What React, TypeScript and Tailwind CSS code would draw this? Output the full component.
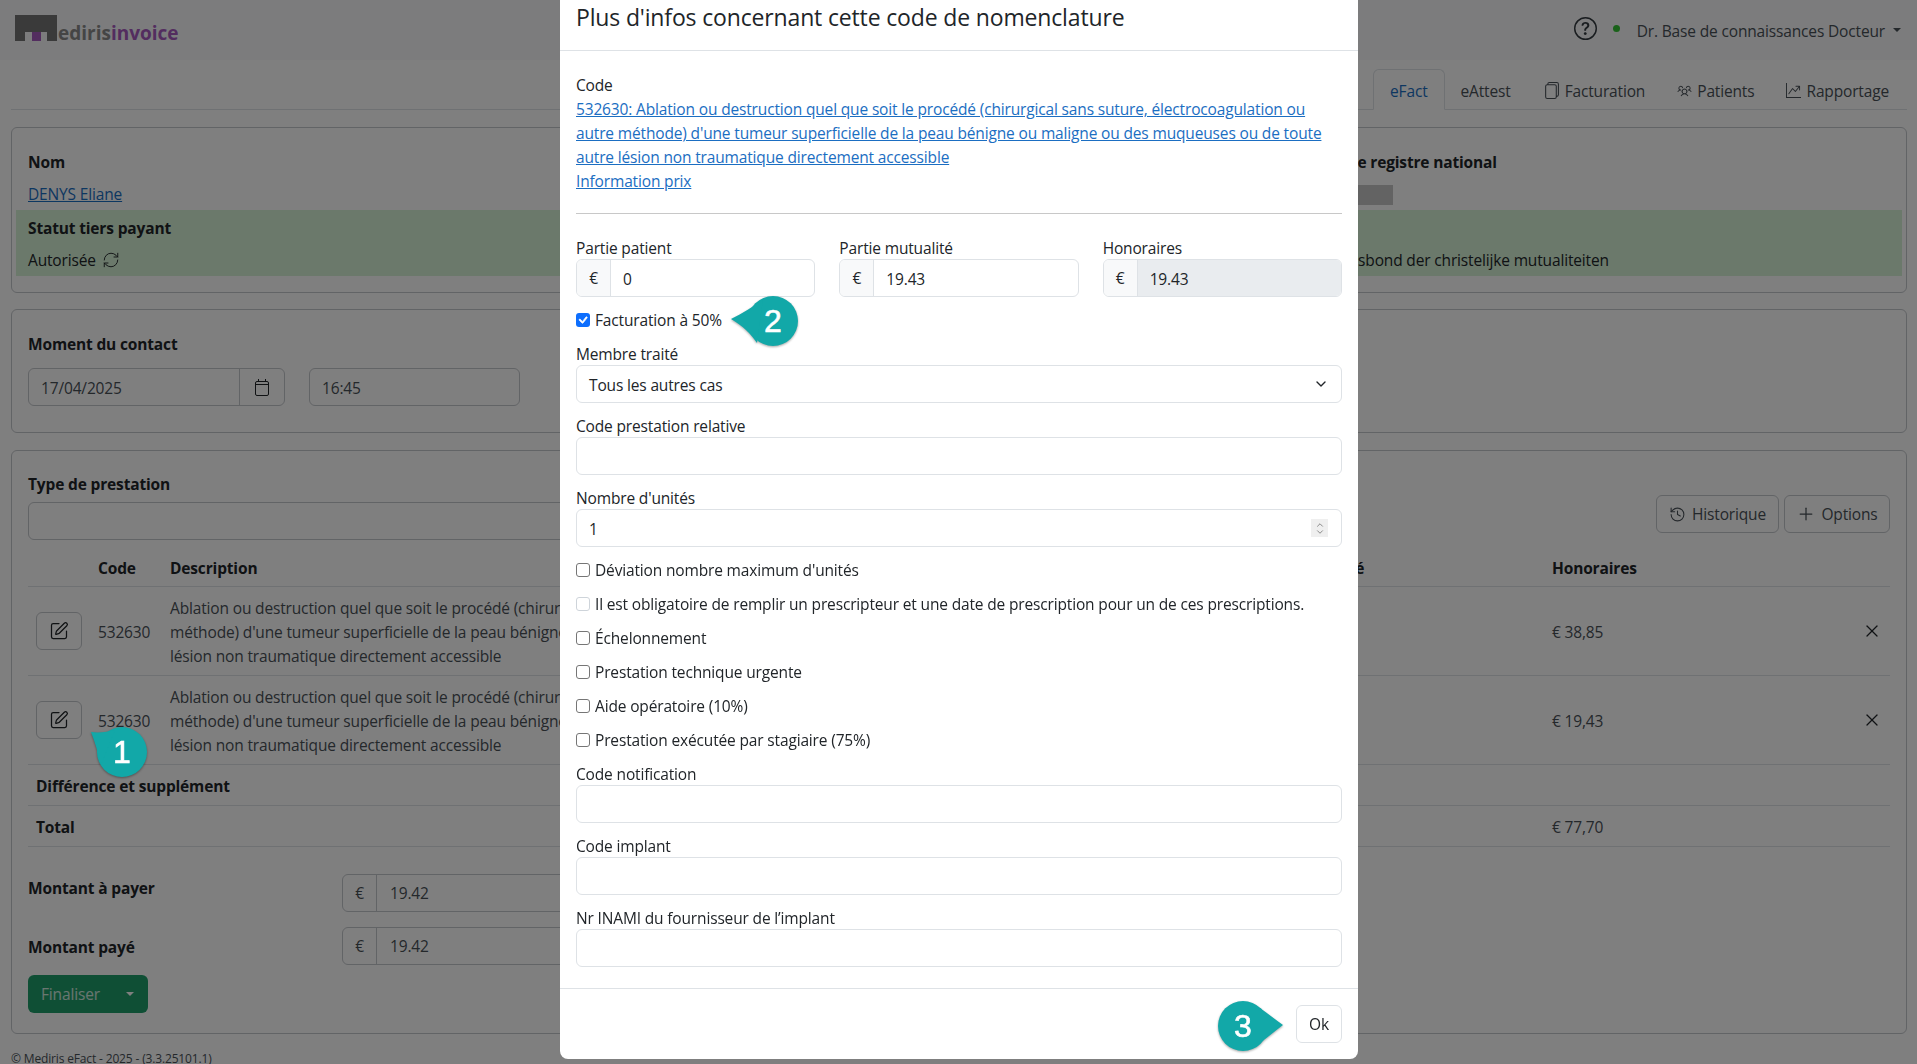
import { ReactNode } from "react";
import { ChevronDown, ChevronUp, History, Plus, RefreshCw, SquarePen, X } from "lucide-react";
import { BsCheck, BsFiles, BsGraphUpArrow, BsQuestionCircle } from "react-icons/bs";
import { PiUsersThree } from "react-icons/pi";

const DESCRIPTION = (
  <>
    Ablation ou destruction quel que soit le procédé (chirurgical sans suture, électrocoagulation ou autre
    <br />
    méthode) d'une tumeur superficielle de la peau bénigne ou maligne ou des muqueuses ou de toute autre
    <br />
    lésion non traumatique directement accessible
  </>
);

const ROW_GRID = "grid grid-cols-[62px_72px_1069px_313px_1fr] items-center border-b border-[#dee2e6]";

function Logo() {
  return (
    <div className="-mt-[4px] flex items-end pl-[15px]">
      <svg width="42" height="26" viewBox="0 0 42 26" className="shrink-0">
        <path d="M0 0H42V26H32V17H10V26H0Z" fill="#747474" />
        <rect x="17" y="17" width="9" height="9" fill="#a65abf" />
      </svg>
      <span className="-mb-[5px] ml-px text-[19px] leading-[26px] font-bold tracking-normal text-[#8a8a8a]">
        ediris<span className="text-[#a65abf]">invoice</span>
      </span>
    </div>
  );
}

function Navbar() {
  return (
    <header className="flex h-[60px] items-center justify-between bg-[#f8f9fa] pr-[16px]">
      <Logo />
      <div className="flex items-center">
        <BsQuestionCircle className="mr-[16px] -mt-1 size-[23px] text-[#343a40]" />
        <span className="mr-[17px] -mt-1 size-[7px] rounded-full bg-[#34c434]" />
        <span className="mt-[2px] text-[#495057]">Dr. Base de connaissances Docteur</span>
        <span className="ml-[8px] h-0 w-0 border-x-[4px] border-t-[4px] border-x-transparent border-t-[#495057]" />
      </div>
    </header>
  );
}

function Tab({ children, active }: { children: ReactNode; active?: boolean }) {
  return (
    <div
      className={
        active
          ? "-mb-px flex h-[41px] items-center rounded-t-md border border-b-white border-[#dee2e6] px-[16px] pt-[2px] text-[#1b6ec2]"
          : "-mb-px flex h-[41px] items-center gap-[5px] border border-transparent px-[15px] pt-[2px] text-[#495057]"
      }
    >
      {children}
    </div>
  );
}

function Tabs() {
  return (
    <nav className="mt-[9px] flex h-[41px] justify-end border-b border-[#dee2e6] pr-[2px]">
      <Tab active>eFact</Tab>
      <Tab>eAttest</Tab>
      <Tab>
        <BsFiles className="size-[17px]" />
        Facturation
      </Tab>
      <Tab>
        <PiUsersThree className="size-[15px]" />
        Patients
      </Tab>
      <Tab>
        <BsGraphUpArrow className="size-[15px]" />
        Rapportage
      </Tab>
    </nav>
  );
}

function PatientCard() {
  return (
    <section className="mt-[17px] h-[166px] rounded-md border border-[#c4c8cc] px-[16px] pt-[22px]">
      <div className="grid grid-cols-[1253px_1fr]">
        <div className="flex flex-col gap-[8px]">
          <strong className="font-bold">Nom</strong>
          <a className="text-[#1b6ec2] underline">DENYS Eliane</a>
        </div>
        <div className="flex flex-col gap-[8px]">
          <strong className="font-bold">Numéro de registre national</strong>
          <span className="mt-[3px] h-[20px] w-[112px] bg-[#c6c6c6]" />
        </div>
      </div>
      <div className="-mx-[12px] mt-[4px] grid h-[66px] grid-cols-[1253px_1fr] bg-[#d6f2d6] px-[12px] pt-[6px]">
        <div className="flex flex-col gap-[8px]">
          <strong className="font-bold">Statut tiers payant</strong>
          <span className="flex items-center gap-[6px]">
            Autorisée <RefreshCw className="size-[18px]" strokeWidth={1.25} />
          </span>
        </div>
        <div className="flex flex-col gap-[8px]">
          <strong className="pl-[1px] font-bold">Mutualité</strong>
          <span className="pl-[42px]">Landsbond der christelijke mutualiteiten</span>
        </div>
      </div>
    </section>
  );
}

function CalendarIcon() {
  return (
    <svg width="14" height="17" viewBox="0 0 14 17" fill="none" stroke="currentColor" strokeWidth="1">
      <rect x="0.5" y="2.5" width="13" height="14" rx="1.5" />
      <path d="M0.5 5.5H13.5M3.5 0V2.5M10.5 0V2.5" />
    </svg>
  );
}

function ContactCard() {
  return (
    <section className="mt-[16px] h-[124px] rounded-md border border-[#c4c8cc] px-[16px] pt-[22px]">
      <strong className="block h-[24px] font-bold">Moment du contact</strong>
      <div className="mt-[12px] flex gap-[24px]">
        <div className="flex h-[38px] w-[257px] rounded-md border border-[#c4c8cc]">
          <span className="flex flex-1 items-center pl-[12px] pt-[2px] text-[#495057]">17/04/2025</span>
          <span className="flex w-[45px] items-center justify-center border-l border-[#c4c8cc]">
            <CalendarIcon />
          </span>
        </div>
        <div className="flex h-[38px] w-[211px] items-center rounded-md border border-[#c4c8cc] pl-[12px] pt-[2px] text-[#495057]">
          16:45
        </div>
      </div>
    </section>
  );
}

function PrestationRow({ amount }: { amount: string }) {
  return (
    <div className={`${ROW_GRID} h-[89px]`}>
      <div className="flex justify-end pr-[8px]">
        <span className="flex h-[38px] w-[46px] items-center justify-center rounded-md border border-[#c4c8cc]">
          <SquarePen className="size-[20px] text-[#212529]" strokeWidth={1.5} />
        </span>
      </div>
      <span className="pl-[8px] pt-[2px] text-[#495057]">532630</span>
      <span className="overflow-hidden whitespace-nowrap pl-[8px] pt-[2px] text-[#495057]">{DESCRIPTION}</span>
      <span />
      <div className="flex items-center justify-between pl-[8px] pr-[8px]">
        <span className="pt-[2px] text-[#495057]">{amount}</span>
        <X className="size-[20px] text-[#212529]" strokeWidth={1.5} />
      </div>
    </div>
  );
}

function AmountRow({ label, value, top, labelTop }: { label: string; value: string; top: string; labelTop: string }) {
  return (
    <div className={`flex items-start ${top}`}>
      <strong className={`w-[314px] font-bold ${labelTop}`}>{label}</strong>
      <div className="flex h-[38px] w-[300px] rounded-md border border-[#c4c8cc]">
        <span className="flex w-[34px] items-center justify-center border-r border-[#c4c8cc] text-[#495057]">€</span>
        <span className="flex items-center pl-[13px] text-[#495057]">{value}</span>
      </div>
    </div>
  );
}

function PrestationCard() {
  return (
    <section className="mt-[17px] h-[584px] rounded-md border border-[#c4c8cc] px-[16px] pt-[21px]">
      <div className="flex items-start justify-between">
        <div className="w-[1300px]">
          <strong className="block h-[24px] font-bold">Type de prestation</strong>
          <div className="mt-[6px] h-[38px] rounded-md border border-[#c4c8cc]" />
        </div>
        <div className="mt-[23px] flex gap-[5px]">
          <span className="flex h-[38px] w-[123px] items-center justify-center gap-[6px] rounded-md border border-[#c4c8cc] text-[#495057]">
            <History className="size-[17px]" strokeWidth={1.5} />
            Historique
          </span>
          <span className="flex h-[38px] w-[106px] items-center justify-center gap-[5px] rounded-md border border-[#c4c8cc] text-[#495057]">
            <Plus className="size-[20px]" strokeWidth={1.5} />
            Options
          </span>
        </div>
      </div>
      <div className="mt-[16px]">
        <div className={`${ROW_GRID} h-[31px] pb-[8px] font-bold`}>
          <span />
          <span className="pl-[8px]">Code</span>
          <span className="pl-[8px]">Description</span>
          <span className="pl-[8px]">Partie mutualité</span>
          <span className="pl-[8px]">Honoraires</span>
        </div>
        <PrestationRow amount="€ 38,85" />
        <PrestationRow amount="€ 19,43" />
        <div className="flex h-[41px] items-center border-b border-[#dee2e6] pl-[8px] pt-[2px] font-bold">
          Différence et supplément
        </div>
        <div className={`${ROW_GRID} h-[41px] pt-[2px]`}>
          <strong className="col-span-4 pl-[8px] font-bold">Total</strong>
          <span className="pl-[8px] text-[#495057]">€ 77,70</span>
        </div>
      </div>
      <AmountRow label="Montant à payer" value="19.42" top="mt-[27px]" labelTop="mt-[2px]" />
      <AmountRow label="Montant payé" value="19.42" top="mt-[15px]" labelTop="mt-[8px]" />
      <div className="mt-[10px] flex h-[38px] w-[120px] items-center justify-between rounded-md bg-[#1f9f6a] pl-[13px] pr-[14px] text-white/80">
        Finaliser
        <span className="h-0 w-0 border-x-[4px] border-t-[4px] border-x-transparent border-t-white" />
      </div>
    </section>
  );
}

function Field({ label, className, children }: { label: string; className?: string; children?: ReactNode }) {
  return (
    <div className={className}>
      <label className="block h-[24px] leading-[26px]">{label}</label>
      <div className="flex h-[38px] items-center justify-between rounded-md border border-[#dee2e6] pl-[12px] pr-[12px]">
        {children}
      </div>
    </div>
  );
}

function Money({ label, value, disabled }: { label: string; value: string; disabled?: boolean }) {
  return (
    <div className="flex-1">
      <label className="block h-[24px] leading-[26px]">{label}</label>
      <div className="flex h-[38px] overflow-hidden rounded-md border border-[#dee2e6]">
        <span className="flex w-[34px] items-center justify-center border-r border-[#dee2e6] bg-[#f8f9fa]">€</span>
        <span className={disabled ? "flex flex-1 items-center bg-[#e9ecef] pl-[12px] pt-px" : "flex flex-1 items-center pl-[12px] pt-px"}>
          {value}
        </span>
      </div>
    </div>
  );
}

function Check({ label, checked, faint }: { label: string; checked?: boolean; faint?: boolean }) {
  return (
    <div className="flex h-[24px] items-center gap-[5px]">
      <span
        className={
          checked
            ? "flex size-[14px] items-center justify-center rounded-[3px] bg-[#0d6efd] text-white"
            : faint
              ? "size-[14px] rounded-[3px] border border-[#ced4da]"
              : "size-[14px] rounded-[3px] border border-[#767676]"
        }
      >
        {checked && <BsCheck className="size-[16px] shrink-0" strokeWidth={0.6} />}
      </span>
      <span>{label}</span>
    </div>
  );
}

function Modal() {
  return (
    <div className="absolute left-[560px] top-[-18px] flex h-[1077px] w-[798px] flex-col rounded-b-lg bg-white">
      <div className="flex h-[69px] shrink-0 items-center border-b border-[#dee2e6] px-[16px] pt-[2px] text-[23px]">
        Plus d'infos concernant cette code de nomenclature
      </div>
      <div className="flex-1 px-[16px] pt-[22px]">
        <div>Code</div>
        <a className="block text-[#1b6ec2] underline">
          532630: Ablation ou destruction quel que soit le procédé (chirurgical sans suture, électrocoagulation ou
          <br />
          autre méthode) d'une tumeur superficielle de la peau bénigne ou maligne ou des muqueuses ou de toute
          <br />
          autre lésion non traumatique directement accessible
        </a>
        <a className="block text-[#1b6ec2] underline">Information prix</a>
        <hr className="mt-[20px] border-[#c8c8c8]" />
        <div className="mt-[21px] flex gap-[24px]">
          <Money label="Partie patient" value="0" />
          <Money label="Partie mutualité" value="19.43" />
          <Money label="Honoraires" value="19.43" disabled />
        </div>
        <div className="mt-[11px]">
          <Check label="Facturation à 50%" checked />
        </div>
        <Field label="Membre traité" className="mt-[9px]">
          <span className="pt-px">Tous les autres cas</span>
          <ChevronDown className="size-[16px]" />
        </Field>
        <Field label="Code prestation relative" className="mt-[10px]" />
        <Field label="Nombre d'unités" className="mt-[10px]">
          <span className="pt-px">1</span>
          <span className="mr-[1px] flex h-[18px] w-[17px] flex-col items-center justify-center bg-[#efefef] text-[#767676]">
            <ChevronUp className="-mb-[3px] size-[10px]" />
            <ChevronDown className="size-[10px]" />
          </span>
        </Field>
        <div className="mt-[11px] flex flex-col gap-[10px]">
          <Check label="Déviation nombre maximum d'unités" />
          <Check label="Il est obligatoire de remplir un prescripteur et une date de prescription pour un de ces prescriptions." faint />
          <Check label="Échelonnement" />
          <Check label="Prestation technique urgente" />
          <Check label="Aide opératoire (10%)" />
          <Check label="Prestation exécutée par stagiaire (75%)" />
        </div>
        <Field label="Code notification" className="mt-[9px]" />
        <Field label="Code implant" className="mt-[10px]" />
        <Field label="Nr INAMI du fournisseur de l’implant" className="mt-[10px]" />
      </div>
      <div className="flex h-[71px] shrink-0 items-start justify-end border-t border-[#dee2e6] px-[16px] pt-[16px]">
        <span className="flex h-[38px] w-[46px] items-center justify-center rounded-md border border-[#dee2e6]">Ok</span>
      </div>
    </div>
  );
}

function Bubble({
  n,
  className,
  viewBox,
  path,
  cx,
  textClass,
}: {
  n: string;
  className: string;
  viewBox: string;
  path: string;
  cx: number;
  textClass: string;
}) {
  return (
    <div className={`absolute h-[50px] ${className}`}>
      <svg className="size-full overflow-visible [filter:drop-shadow(0_1px_1px_rgba(0,0,0,0.35))]" viewBox={viewBox}>
        <circle cx={cx} cy="25" r="25" fill="#12a8a8" />
        <path d={path} fill="#12a8a8" />
      </svg>
      <span
        className={`absolute top-0 flex h-[50px] w-[50px] items-center justify-center font-['Liberation_Sans',sans-serif] text-[32px] tracking-normal text-white [-webkit-text-stroke:0.6px_white] ${textClass}`}
      >
        {n}
      </span>
    </div>
  );
}

export default function App() {
  return (
    <div className="relative h-[1064px] overflow-hidden bg-white font-['Open_Sans',sans-serif] text-[15.5px] leading-[24px] tracking-[-0.01em] text-[#212529]">
      <Navbar />
      <main className="ml-[11px] w-[1896px]">
        <Tabs />
        <PatientCard />
        <ContactCard />
        <PrestationCard />
        <footer className="mt-[15px] text-[12px] leading-[20px] text-[#495057]">© Mediris eFact - 2025 - (3.3.25101.1)</footer>
      </main>
      <div className="fixed inset-0 bg-black/50" />
      <Modal />
      <Bubble n="1" className="left-[91px] top-[727px] w-[56px]" viewBox="0 0 56 50" cx={31} textClass="left-[6px]" path="M0 5C8 6 16 5 24 3L10 38C7 26 4 15 0 5Z" />
      <Bubble n="2" className="left-[731px] top-[296px] w-[67px]" viewBox="0 0 67 50" cx={42} textClass="left-[17px]" path="M0 23C12 17 22 11 32 3L26 47C20 38 12 30 0 23Z" />
      <Bubble n="3" className="left-[1218px] top-[1001px] w-[65px]" viewBox="0 0 65 50" cx={25} textClass="left-0" path="M65 24C57 18 50 13 42 7L42 42C50 36 57 30 65 24Z" />
    </div>
  );
}
